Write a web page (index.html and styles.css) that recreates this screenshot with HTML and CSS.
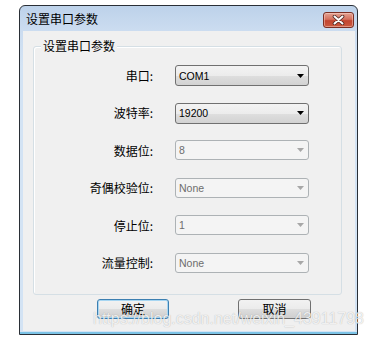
FILE: index.html
```html
<!DOCTYPE html>
<html lang="zh-CN">
<head>
<meta charset="utf-8">
<title>设置串口参数</title>
<link rel="stylesheet" href="styles.css">
</head>
<body>
<div class="window">
  <div class="titlebar">
    <span class="title">设置串口参数</span>
    <button class="close" type="button" aria-label="关闭">
      <svg width="13" height="10" viewBox="0 0 13 10"><path d="M2.5 1.5 L10.5 8.5 M10.5 1.5 L2.5 8.5" stroke="#4b2520" stroke-width="3.6" stroke-linecap="round" fill="none"/><path d="M2.5 1.5 L10.5 8.5 M10.5 1.5 L2.5 8.5" stroke="#ffffff" stroke-width="2" stroke-linecap="round" fill="none"/></svg>
    </button>
  </div>
  <div class="client">
    <div class="group">
      <span class="group-title">设置串口参数</span>
      <div class="form">
        <label class="label">串口:</label>
        <div class="combo"><span>COM1</span><svg class="arrow" width="7" height="4" viewBox="0 0 7 4"><path d="M0 0H7L3.5 4Z"/></svg></div>
        <label class="label">波特率:</label>
        <div class="combo"><span>19200</span><svg class="arrow" width="7" height="4" viewBox="0 0 7 4"><path d="M0 0H7L3.5 4Z"/></svg></div>
        <label class="label">数据位:</label>
        <div class="combo disabled"><span>8</span><svg class="arrow" width="7" height="4" viewBox="0 0 7 4"><path d="M0 0H7L3.5 4Z"/></svg></div>
        <label class="label">奇偶校验位:</label>
        <div class="combo disabled"><span>None</span><svg class="arrow" width="7" height="4" viewBox="0 0 7 4"><path d="M0 0H7L3.5 4Z"/></svg></div>
        <label class="label">停止位:</label>
        <div class="combo disabled"><span>1</span><svg class="arrow" width="7" height="4" viewBox="0 0 7 4"><path d="M0 0H7L3.5 4Z"/></svg></div>
        <label class="label">流量控制:</label>
        <div class="combo disabled"><span>None</span><svg class="arrow" width="7" height="4" viewBox="0 0 7 4"><path d="M0 0H7L3.5 4Z"/></svg></div>
      </div>
    </div>
    <div class="buttons">
      <button class="btn default" type="button">确定</button>
      <button class="btn cancel" type="button">取消</button>
    </div>
  </div>
</div>
<div class="watermark">https://blog.csdn.net/weixin_43911798</div>
</body>
</html>
```
FILE: styles.css
```css
html, body {
  margin: 0;
  padding: 0;
  background: #ffffff;
}
body {
  position: relative;
  width: 374px;
  height: 338px;
  overflow: hidden;
  font-family: "Noto Sans CJK SC", "Noto Sans", sans-serif;
  font-size: 12px;
  color: #000;
}
.window {
  margin: 5px 0 0 19px;
  width: 337px;
  height: 328px;
  border: 1px solid #2a2f36;
  border-radius: 6px 6px 0 0;
  background: linear-gradient(#bdd2ea 0px, #cbdcf0 24px, #d3e3f4 60px, #d3e3f4 100%);
  display: flex;
  flex-direction: column;
  box-shadow: inset 0 -2px 0 #7cc3e6;
}
.titlebar {
  height: 25px;
  display: flex;
  align-items: flex-start;
  justify-content: space-between;
  box-sizing: border-box;
  padding: 0 3px 0 6px;
}
.title {
  margin-top: 5px;
  line-height: 16px;
  font-size: 12px;
  color: #000;
}
.close {
  margin-top: 6px;
  width: 31px;
  height: 16px;
  padding: 0;
  border: 1px solid #7b2f24;
  border-radius: 3px;
  background: linear-gradient(#e3a393 0%, #d5705d 45%, #c24530 55%, #cb5a3f 100%);
  box-shadow: inset 0 0 0 1px rgba(255, 220, 210, 0.45);
  display: flex;
  align-items: center;
  justify-content: center;
}
.client {
  margin: 0 2px 2px 3px;
  height: 300px;
  background: #f0f0f0;
  box-sizing: border-box;
  padding-top: 15px;
  display: flex;
  flex-direction: column;
}
.group {
  position: relative;
  margin: 0 13px 0 10px;
  border: 1px solid #d5dfe5;
  border-radius: 3px;
  box-shadow: inset 1px 1px 0 #ffffff;
  padding: 18px 0 20px 0;
}
.group-title {
  position: absolute;
  top: -9px;
  left: 7px;
  padding: 0 2px;
  background: #f0f0f0;
  line-height: 16px;
}
.form {
  display: grid;
  grid-template-columns: 119px 134px;
  grid-auto-rows: 21px;
  column-gap: 22px;
  row-gap: 16.6px;
}
.label {
  display: flex;
  align-items: center;
  justify-content: flex-end;
  line-height: 16px;
}
.combo {
  box-sizing: border-box;
  height: 21px;
  border: 1px solid #707070;
  border-radius: 3px;
  background: linear-gradient(#f3f3f3 0%, #ececec 50%, #dedede 52%, #d2d2d2 100%);
  display: flex;
  align-items: center;
  justify-content: space-between;
  padding: 0 3px 0 3px;
  font-family: "Liberation Sans", Arial, sans-serif;
  font-size: 10.5px;
  color: #000;
}
.combo .arrow {
  fill: #000;
  margin-right: 1px;
}
.combo.disabled {
  height: 20px;
  border-color: #adb2b5;
  background: #f4f4f4;
  color: #6d6d6d;
}
.combo.disabled .arrow {
  fill: #a7a7a7;
}
.buttons {
  display: flex;
  gap: 69px;
  padding-left: 74px;
  margin-top: 4px;
}
.btn {
  box-sizing: border-box;
  height: 20px;
  padding: 0;
  border: 1px solid #707070;
  border-radius: 3px;
  background: linear-gradient(#f2f2f2 0%, #ebebeb 50%, #dddddd 52%, #cfcfcf 100%);
  font-family: "Noto Sans CJK SC", sans-serif;
  font-size: 12px;
  line-height: 16px;
  color: #000;
}
.btn.default {
  width: 72px;
  border-color: #3c7fb1;
  box-shadow: inset 0 0 0 1px #a7d6f2;
}
.btn.cancel {
  width: 73px;
}
.watermark {
  position: absolute;
  left: 93px;
  top: 311px;
  font-family: "Liberation Sans", Arial, sans-serif;
  font-size: 16px;
  line-height: 16px;
  white-space: nowrap;
  color: rgba(255, 255, 255, 0.82);
  text-shadow: 0 0 1px rgba(0, 0, 0, 0.3);
}
```
